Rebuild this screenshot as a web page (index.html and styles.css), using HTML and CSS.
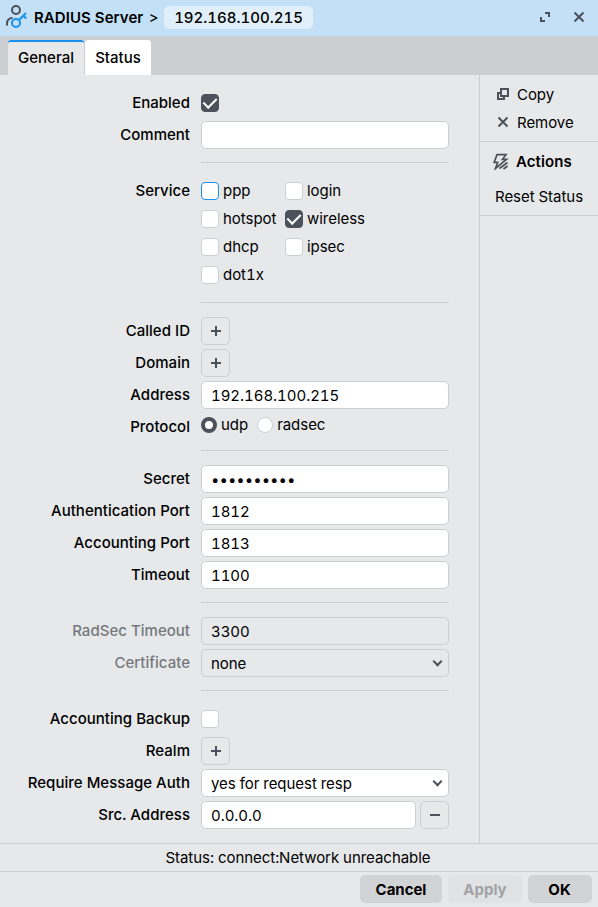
FILE: index.html
```html
<!DOCTYPE html>
<html lang="en">
<head>
    <meta charset="UTF-8">
    <meta name="viewport" content="width=device-width, initial-scale=1.0">
    <title>RADIUS Server</title>
    <link rel="stylesheet" href="styles.css">
</head>
<body>
    <div class="window">
        <header class="titlebar">
            <svg class="title-icon" width="24" height="26" viewBox="0 0 24 26" fill="none" stroke-width="2">
                <circle cx="11" cy="6" r="4" stroke="#4b525c"/>
                <path d="M2 21.500v-2.200c0-3.200 2.200-5.300 5.600-5.300" stroke="#4b525c"/>
                <circle cx="11" cy="19" r="4" stroke="#1a91ee"/>
                <path d="M14 16l7-7M18.500 12l2.800 2.600" stroke="#1a91ee"/>
            </svg>
            <h1>RADIUS Server</h1>
            <span class="crumb-arrow">&gt;</span>
            <span class="crumb">192.168.100.215</span>
            <div class="window-buttons">
                <svg width="10" height="10" viewBox="0 0 10 10" fill="none" stroke="#4b525c" stroke-width="2">
                    <path d="M5 1h4v4M1 5v4h4"/>
                </svg>
                <svg width="10" height="10" viewBox="0 0 10 10" fill="none" stroke="#4b525c" stroke-width="2">
                    <path d="M.5.5l9 9M9.500.5l-9 9"/>
                </svg>
            </div>
        </header>

        <nav class="tabs">
            <a class="tab active">General</a>
            <a class="tab">Status</a>
        </nav>

        <div class="content">
            <main class="form">
                <div class="group">
                    <div class="row">
                        <label>Enabled</label>
                        <span class="checkbox checked"></span>
                    </div>
                    <div class="row">
                        <label>Comment</label>
                        <div class="input"></div>
                    </div>
                </div>

                <div class="group">
                    <div class="row">
                        <label>Service</label>
                        <div class="services">
                            <span class="option"><span class="checkbox focused"></span><span>ppp</span></span>
                            <span class="option"><span class="checkbox"></span><span>login</span></span>
                            <span class="option"><span class="checkbox"></span><span>hotspot</span></span>
                            <span class="option"><span class="checkbox checked"></span><span>wireless</span></span>
                            <span class="option"><span class="checkbox"></span><span>dhcp</span></span>
                            <span class="option"><span class="checkbox"></span><span>ipsec</span></span>
                            <span class="option"><span class="checkbox"></span><span>dot1x</span></span>
                        </div>
                    </div>
                </div>

                <div class="group">
                    <div class="row">
                        <label>Called ID</label>
                        <button class="square-button plus"></button>
                    </div>
                    <div class="row">
                        <label>Domain</label>
                        <button class="square-button plus"></button>
                    </div>
                    <div class="row">
                        <label>Address</label>
                        <div class="input">192.168.100.215</div>
                    </div>
                    <div class="row protocol">
                        <label>Protocol</label>
                        <div class="radios">
                            <span class="option"><span class="radio selected"></span><span>udp</span></span>
                            <span class="option"><span class="radio"></span><span>radsec</span></span>
                        </div>
                    </div>
                </div>

                <div class="group">
                    <div class="row">
                        <label>Secret</label>
                        <div class="input secret">••••••••••</div>
                    </div>
                    <div class="row">
                        <label>Authentication Port</label>
                        <div class="input">1812</div>
                    </div>
                    <div class="row">
                        <label>Accounting Port</label>
                        <div class="input">1813</div>
                    </div>
                    <div class="row">
                        <label>Timeout</label>
                        <div class="input">1100</div>
                    </div>
                </div>

                <div class="group">
                    <div class="row disabled">
                        <label>RadSec Timeout</label>
                        <div class="input">3300</div>
                    </div>
                    <div class="row disabled">
                        <label>Certificate</label>
                        <div class="input select">none</div>
                    </div>
                </div>

                <div class="group">
                    <div class="row">
                        <label>Accounting Backup</label>
                        <span class="checkbox"></span>
                    </div>
                    <div class="row">
                        <label>Realm</label>
                        <button class="square-button plus"></button>
                    </div>
                    <div class="row">
                        <label>Require Message Auth</label>
                        <div class="input select">yes for request resp</div>
                    </div>
                    <div class="row">
                        <label>Src. Address</label>
                        <div class="input">0.0.0.0</div>
                        <button class="square-button minus"></button>
                    </div>
                </div>
            </main>

            <aside class="sidebar">
                <div class="side-section">
                    <div class="side-item">
                        <svg width="14" height="14" viewBox="0 0 14 14" fill="none" stroke="#4b525c" stroke-width="2">
                            <path d="M5 2h7v7H5zM5 6H2v6h6V9"/>
                        </svg>
                        Copy
                    </div>
                    <div class="side-item">
                        <svg width="14" height="14" viewBox="0 0 14 14" fill="none" stroke="#4b525c" stroke-width="2">
                            <path d="M2.500 2.500l9 9M11.500 2.500l-9 9"/>
                        </svg>
                        Remove
                    </div>
                </div>
                <div class="side-section actions">
                    <div class="side-title">
                        <svg width="16" height="17" viewBox="0 0 16 17" fill="none" stroke="#4b525c" stroke-width="1.700">
                            <path d="M4 1.700h9L9.500 6.300h4L2.500 15.500l2.200-6.200H1.200z"/>
                            <path d="M6.500 15.500l8-6M10.500 16l4-3"/>
                        </svg>
                        Actions
                    </div>
                    <div class="side-link">Reset Status</div>
                </div>
            </aside>
        </div>

        <div class="status">Status: connect:Network unreachable</div>

        <footer class="footer">
            <button class="button cancel">Cancel</button>
            <button class="button apply" disabled>Apply</button>
            <button class="button ok">OK</button>
        </footer>
    </div>
</body>
</html>
```
FILE: styles.css
```css
* {
    margin: 0;
    padding: 0;
    box-sizing: border-box;
}

body {
    font-family: 'Inter', sans-serif;
    font-size: 15px;
    font-variant-numeric: tabular-nums;
    letter-spacing: -0.04px;
    color: #000;
    background: #e6e8ea;
}

svg {
    display: block;
    flex: none;
}

.window {
    display: flex;
    flex-direction: column;
    height: 907px;
    background: #e6e8ea;
}

.titlebar {
    display: flex;
    align-items: center;
    height: 36px;
    padding: 0 14px 2px 5px;
    background: #c4e0f6;
}

.titlebar h1 {
    width: 110px;
    margin-left: 5px;
    font-size: 15px;
    font-weight: 600;
    letter-spacing: 0.05px;
}

.crumb-arrow {
    width: 10px;
    margin: 0 5px 0 5px;
}

.crumb {
    width: 149px;
    height: 23px;
    line-height: 23px;
    text-align: center;
    font-weight: 500;
    letter-spacing: 0;
    background: #e1effa;
    border-radius: 5px;
}

.window-buttons {
    display: flex;
    gap: 24px;
    margin-left: auto;
}

.tabs {
    display: flex;
    gap: 1px;
    height: 39px;
    padding: 4px 8px 0;
    background: #cccfd2;
}

.tab {
    width: 66px;
    line-height: 36px;
    font-weight: 500;
    letter-spacing: 0.02px;
    text-align: center;
    background: #fff;
    border-radius: 3px 3px 0 0;
}

.tab.active {
    width: 76px;
    line-height: 32px;
    background: #e6e8ea;
    border-top: 2px solid #1a91ee;
}

.content {
    display: flex;
    flex: 1;
}

.form {
    width: 479px;
    padding: 14px 30px 0 0;
}

.group {
    display: flex;
    flex-direction: column;
    gap: 4px;
}

.group + .group::before {
    content: '';
    height: 1px;
    margin: 13px 0 10px 201px;
    background: #cccfd2;
}

.row {
    display: flex;
    align-items: center;
    height: 28px;
}

.row label {
    width: 190px;
    margin-right: 11px;
    flex: none;
    line-height: 28px;
    text-align: right;
    font-weight: 500;
    letter-spacing: 0.02px;
}

.row.disabled label {
    color: #75787c;
}

.input {
    flex: 1;
    height: 28px;
    padding: 0 9px;
    line-height: 27px;
    background: #fff;
    border: 1px solid #cccfd2;
    border-radius: 5px;
}

.secret {
    letter-spacing: 0;
}

.row.disabled .input {
    background: none;
}

.checkbox {
    display: flex;
    flex: none;
    width: 18px;
    height: 18px;
    background: #fff;
    border: 1px solid #cccfd2;
    border-radius: 4px;
}

.checkbox.focused {
    border-color: #1a91ee;
}

.checkbox.checked {
    justify-content: center;
    background: #4b525c;
    border-color: #4b525c;
}

.checkbox.checked::after {
    content: '';
    width: 6px;
    height: 11px;
    border: solid #fff;
    border-width: 0 2px 2px 0;
    transform: rotate(45deg);
}

.row:has(.services) {
    height: 112px;
    align-items: flex-start;
}

.services {
    display: grid;
    grid-template-columns: 84px auto;
    grid-auto-rows: 28px;
}

.option {
    display: flex;
    align-items: center;
    gap: 4px;
}

.option span:last-child {
    padding-bottom: 1px;
}

.row.protocol {
    height: 24px;
    align-items: flex-start;
}

.radios {
    display: flex;
    align-items: center;
    gap: 9px;
    height: 24px;
}

.radio {
    width: 16px;
    height: 16px;
    background: #fff;
    border: 1px solid #cccfd2;
    border-radius: 50%;
}

.radio.selected {
    border: 4px solid #4b525c;
}

.square-button {
    display: flex;
    align-items: center;
    justify-content: center;
    width: 29px;
    height: 28px;
    background: none;
    border: 1px solid #cccfd2;
    border-radius: 5px;
}

.square-button::before {
    content: '';
    width: 10px;
    height: 10px;
    background: linear-gradient(#4b525c, #4b525c) center / 10px 2px no-repeat;
}

.square-button.plus::before {
    background: linear-gradient(#4b525c, #4b525c) center / 10px 2px no-repeat, linear-gradient(#4b525c, #4b525c) center / 2px 10px no-repeat;
}

.square-button.minus {
    margin-left: 4px;
}

.select {
    display: flex;
    align-items: center;
    justify-content: space-between;
    padding-right: 7px;
}

.select::after {
    content: '';
    width: 5px;
    height: 5px;
    margin-top: -4px;
    border: solid #4b525c;
    border-width: 0 2px 2px 0;
    transform: rotate(45deg);
}

.sidebar {
    flex: 1;
    border-left: 1px solid #cccfd2;
}

.side-section {
    height: 67px;
    padding-top: 5px;
    border-bottom: 1px solid #cccfd2;
}

.side-section.actions {
    height: 74px;
    padding-top: 3px;
}

.side-item {
    display: flex;
    align-items: center;
    gap: 7px;
    height: 28px;
    padding-left: 16px;
}

.side-title {
    display: flex;
    align-items: center;
    gap: 7px;
    height: 32px;
    padding-left: 13px;
    font-weight: 600;
    letter-spacing: 0.08px;
}

.side-link {
    padding: 6px 0 0 15px;
    line-height: 28px;
}

.status {
    height: 28px;
    line-height: 28px;
    padding-right: 2px;
    text-align: center;
    border-top: 1px solid #cccfd2;
}

.footer {
    display: flex;
    justify-content: flex-end;
    gap: 6px;
    height: 36px;
    padding: 3px 6px 0;
    border-top: 1px solid #cccfd2;
}

.button {
    height: 28px;
    font: 700 15px 'Inter', sans-serif;
    letter-spacing: -0.02px;
    color: #000;
    background: #d1d3d5;
    border: none;
    border-radius: 5px;
}

.button.cancel {
    width: 82px;
}

.button.apply {
    width: 74px;
    color: #a0a2a4;
    background: #e0e2e4;
}

.button.ok {
    width: 64px;
    padding-right: 1px;
}
```
